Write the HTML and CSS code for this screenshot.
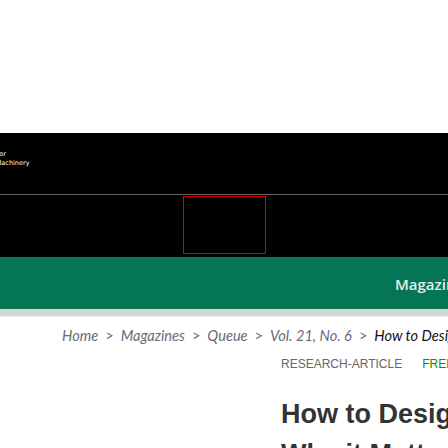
FILE: index.html
```html
<!DOCTYPE html>
<html>
<head>
<meta charset="utf-8">
<link rel="stylesheet" href="styles.css">
</head>
<body>
<div class="page">
  <div class="top"></div>
  <header class="header">
    <div class="brand">
      <div class="logo-text">Association for<br>Computing Machinery</div>
    </div>
    <div class="banner">
      <div class="ad-box"></div>
    </div>
  </header>
  <nav class="nav">
    <span class="nav-item">Magazines</span>
  </nav>
  <div class="shade"></div>
  <div class="crumbs"><a class="crumb">Home</a><span class="sep">&gt;</span><a class="crumb">Magazines</a><span class="sep">&gt;</span><a class="crumb">Queue</a><span class="sep">&gt;</span><a class="crumb">Vol. 21, No. 6</a><span class="sep">&gt;</span><span class="crumb current">How to Design an Interface</span></div>
  <main class="article">
    <div class="tags">
      <span class="tag">RESEARCH-ARTICLE</span>
      <span class="tag free">FREE ACCESS</span>
    </div>
    <h1 class="title">How to Design a Good API and Why it Matters to Developers</h1>
  </main>
</div>
</body>
</html>
```
FILE: styles.css
```css
html, body {
  margin: 0;
  padding: 0;
  background: #fff;
  overflow: hidden;
}
.page {
  width: 448px;
  height: 448px;
  overflow: hidden;
  font-family: "Open Sans", sans-serif;
}
.top {
  height: 133px;
  background: #fff;
}
.header {
  background: #000;
  height: 124px;
  display: flex;
  flex-direction: column;
}
.brand {
  height: 62px;
  box-sizing: border-box;
  padding-top: 17px;
  border-bottom: 1px solid #666;
  overflow: hidden;
}
.logo-text {
  margin-left: -42px;
  color: #fff;
  font-family: "DejaVu Sans", sans-serif;
  font-size: 6.5px;
  line-height: 9px;
  white-space: nowrap;
}
.banner {
  flex: 1;
  display: flex;
  justify-content: center;
  padding-top: 1px;
}
.ad-box {
  width: 81px;
  height: 56px;
  border: 1px solid #e00000;
}
.nav {
  height: 52px;
  background: #047656;
  display: flex;
  align-items: center;
  padding-left: 395px;
  white-space: nowrap;
}
.nav-item {
  color: #e4efec;
  font-family: "Open Sans", sans-serif;
  font-weight: 600;
  font-size: 15px;
  padding-top: 2px;
}
.shade {
  height: 8px;
  background: linear-gradient(#d5d5d5 0, #d5d5d5 70%, #ececec 100%);
}
.crumbs {
  display: flex;
  gap: 7px;
  padding-left: 62px;
  height: 30px;
  line-height: 30px;
  margin-top: 4px;
  white-space: nowrap;
  font-family: "Lato", sans-serif;
  font-style: italic;
  font-size: 14.6px;
  color: #676a78;
}
.crumb {
  color: #676a78;
  text-decoration: none;
}
.crumb.current {
  color: #111;
}
.sep {
  font-style: normal;
  color: #676a78;
}
.article {
  padding-left: 281px;
  padding-top: 6px;
  white-space: nowrap;
}
.tags {
  display: flex;
  gap: 20px;
  font-family: "Liberation Sans", Arial, sans-serif;
  font-size: 12px;
  line-height: 14px;
}
.tag {
  color: #666;
}
.tag.free {
  color: #079307;
}
.title {
  margin: 23px 0 0;
  font-family: "Liberation Sans", Arial, sans-serif;
  font-weight: bold;
  font-size: 27px;
  line-height: 40px;
  color: #333;
  white-space: normal;
  width: 400px;
}
```
